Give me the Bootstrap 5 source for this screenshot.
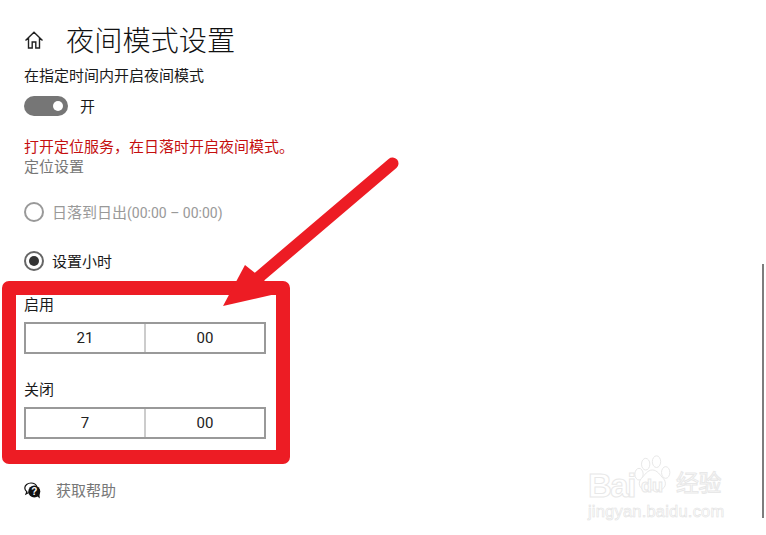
<!DOCTYPE html>
<html lang="zh-CN">
<head>
    <meta charset="UTF-8">
    <meta name="viewport" content="width=device-width, initial-scale=1.0">
    <title>夜间模式设置</title>
    <link href="https://cdn.jsdelivr.net/npm/bootstrap@5.3.0/dist/css/bootstrap.min.css" rel="stylesheet">
    <style>
        html, body { height: 100%; overflow: hidden; }
        body { font-family: Roboto, "Noto Sans CJK SC", sans-serif; font-size: 15px; line-height: 22px; color: #1a1a1a; background: #fff; }
        .page-wrap { position: relative; width: 766px; height: 535px; padding: 22px 0 0 24px; overflow: hidden; }
        .page-head { height: 36px; gap: 22px; }
        .page-title { font-size: 28.2px; line-height: 36px; padding-top: 4px; font-weight: 300; margin: 0; color: #111; }
        .row-line { height: 20px; }
        .row-line > span { padding-top: 2px; }
        .mt-label { margin-top: 7px; }
        .mt-switch { margin-top: 11px; }
        .switch-track { width: 44px; height: 20px; border-radius: 10px; background: #767676; position: relative; margin-right: 12px; }
        .switch-knob { position: absolute; right: 5px; top: 5px; width: 10px; height: 10px; border-radius: 50%; background: #fff; }
        .warn-text { color: #c50f0f; margin-top: 20px; }
        .loc-link { color: #777; }
        .radio-ring { width: 20px; height: 20px; border-radius: 50%; border: 2px solid #999; margin-right: 8px; flex: none; }
        .radio-ring.is-on { border-color: #666; }
        .radio-dot { width: 10px; height: 10px; border-radius: 50%; background: #333; }
        .is-off { color: #999; }
        .time-range { font-size: 14px; }
        .first-radio { margin-top: 26px; }
        .second-radio { margin-top: 29px; }
        .time-label { margin-top: 23px; }
        .time-label.second { margin-top: 25px; }
        .time-box { width: 242px; height: 32px; border: 2px solid #999; margin-top: 8px; }
        .time-box > div { line-height: 28px; text-align: center; font-size: 15px; color: #222; }
        .time-box > div:first-child { width: 118px; }
        .time-box > div + div { width: 120px; border-left: 2px solid #ccc; }
        .help-row { margin-top: 41px; color: #777; }
        .help-row svg { margin-right: 15px; }
        .red-frame { position: absolute; left: 2px; top: 281px; width: 288px; height: 183px; border: 14px solid #ed1c24; border-radius: 7px; }
        .red-arrow { position: absolute; left: 0; top: 0; pointer-events: none; }
        .side-scroll { position: absolute; left: 762px; top: 264px; width: 2px; height: 254px; background: #7d7d7d; }
        .wm-box { position: absolute; left: 587px; top: 450px; width: 150px; height: 70px; color: #fff; font-family: "Liberation Sans", "Noto Sans CJK SC", sans-serif; -webkit-text-stroke: 1px #e8e8e8; }
        .wm-bai { position: absolute; left: 1px; top: 18px; font-size: 33px; line-height: 36px; font-weight: 700; letter-spacing: -1.5px; }
        .wm-du { position: absolute; left: 54px; top: 26px; font-size: 18px; line-height: 20px; font-weight: 700; }
        .wm-cn { position: absolute; left: 89px; top: 20px; font-size: 23px; line-height: 26px; letter-spacing: -.5px; }
        .wm-url { position: absolute; left: 1px; top: 52px; font-size: 16.5px; line-height: 18px; white-space: nowrap; letter-spacing: .2px; -webkit-text-stroke: .6px #e2e2e2; }
        .wm-paw { position: absolute; left: 47px; top: 3px; }
    </style>
</head>
<body>
    <div class="page-wrap">
        <div class="page-head d-flex align-items-center">
            <svg width="20" height="20" viewBox="0 0 20 20" fill="none" stroke="#222" stroke-width="1.4">
                <path d="M1.5 10.5 10 2.2l8.5 8.3M4.5 8v10h3.7v-6h3.6v6h3.7V8"/>
            </svg>
            <h1 class="page-title">夜间模式设置</h1>
        </div>

        <div class="row-line mt-label">在指定时间内开启夜间模式</div>
        <div class="row-line mt-switch d-flex align-items-center">
            <div class="switch-track"><div class="switch-knob"></div></div>
            <span>开</span>
        </div>

        <div class="row-line warn-text">打开定位服务，在日落时开启夜间模式。</div>
        <div class="row-line loc-link">定位设置</div>

        <div class="row-line first-radio d-flex align-items-center is-off">
            <div class="radio-ring"></div>
            <span>日落到日出<b class="time-range fw-normal">(00:00 – 00:00)</b></span>
        </div>
        <div class="row-line second-radio d-flex align-items-center">
            <div class="radio-ring is-on d-flex align-items-center justify-content-center"><div class="radio-dot"></div></div>
            <span>设置小时</span>
        </div>

        <div class="row-line time-label">启用</div>
        <div class="time-box d-flex">
            <div>21</div>
            <div>00</div>
        </div>
        <div class="row-line time-label second">关闭</div>
        <div class="time-box d-flex">
            <div>7</div>
            <div>00</div>
        </div>

        <div class="row-line help-row d-flex align-items-center">
            <svg width="17" height="17" viewBox="0 0 17 17">
                <path d="M7 1C3.6 1 .8 3.2.8 6c0 1.500.8 2.800 2 3.700L2 12l2.700-1.500" fill="#fff" stroke="#111" stroke-width="1.2"/>
                <path d="M7 1c2.700 0 5 1.400 5.800 3.500" fill="none" stroke="#111" stroke-width="1.2"/>
                <circle cx="10.300" cy="9.500" r="6" fill="#111"/>
                <path d="M13 14l2.800 2.600-.4-4.600z" fill="#111"/>
                <text x="10.300" y="13" text-anchor="middle" font-size="10" font-weight="700" fill="#fff" font-family="Liberation Sans">?</text>
            </svg>
            <span>获取帮助</span>
        </div>

        <!-- red markup drawn over the screenshot -->
        <div class="red-frame"></div>
        <svg class="red-arrow" width="766" height="535" viewBox="0 0 766 535">
            <line x1="392.500" y1="163.500" x2="252" y2="283" stroke="#ed1c24" stroke-width="12" stroke-linecap="round"/>
            <polygon points="223,306 245,265 280,293" fill="#ed1c24"/>
        </svg>

        <div class="side-scroll"></div>

        <div class="wm-box">
            <svg class="wm-paw" width="40" height="44" viewBox="0 0 48 52" fill="#fff" stroke="#e8e8e8" stroke-width="1.200">
                <ellipse cx="14" cy="13" rx="5" ry="7"/>
                <ellipse cx="27" cy="10" rx="5" ry="7"/>
                <ellipse cx="6" cy="25" rx="5" ry="7"/>
                <ellipse cx="38" cy="23" rx="5" ry="7"/>
                <path d="M22 20c6 0 9 6 13 10 5 5 3 14-6 14H15C6 44 4 35 9 30c4-4 7-10 13-10z"/>
            </svg>
            <div class="wm-bai">Bai</div>
            <div class="wm-du">du</div>
            <div class="wm-cn">经验</div>
            <div class="wm-url">jingyan.baidu.com</div>
        </div>
    </div>
    <script src="https://cdn.jsdelivr.net/npm/bootstrap@5.3.0/dist/js/bootstrap.bundle.min.js"></script>
</body>
</html>
